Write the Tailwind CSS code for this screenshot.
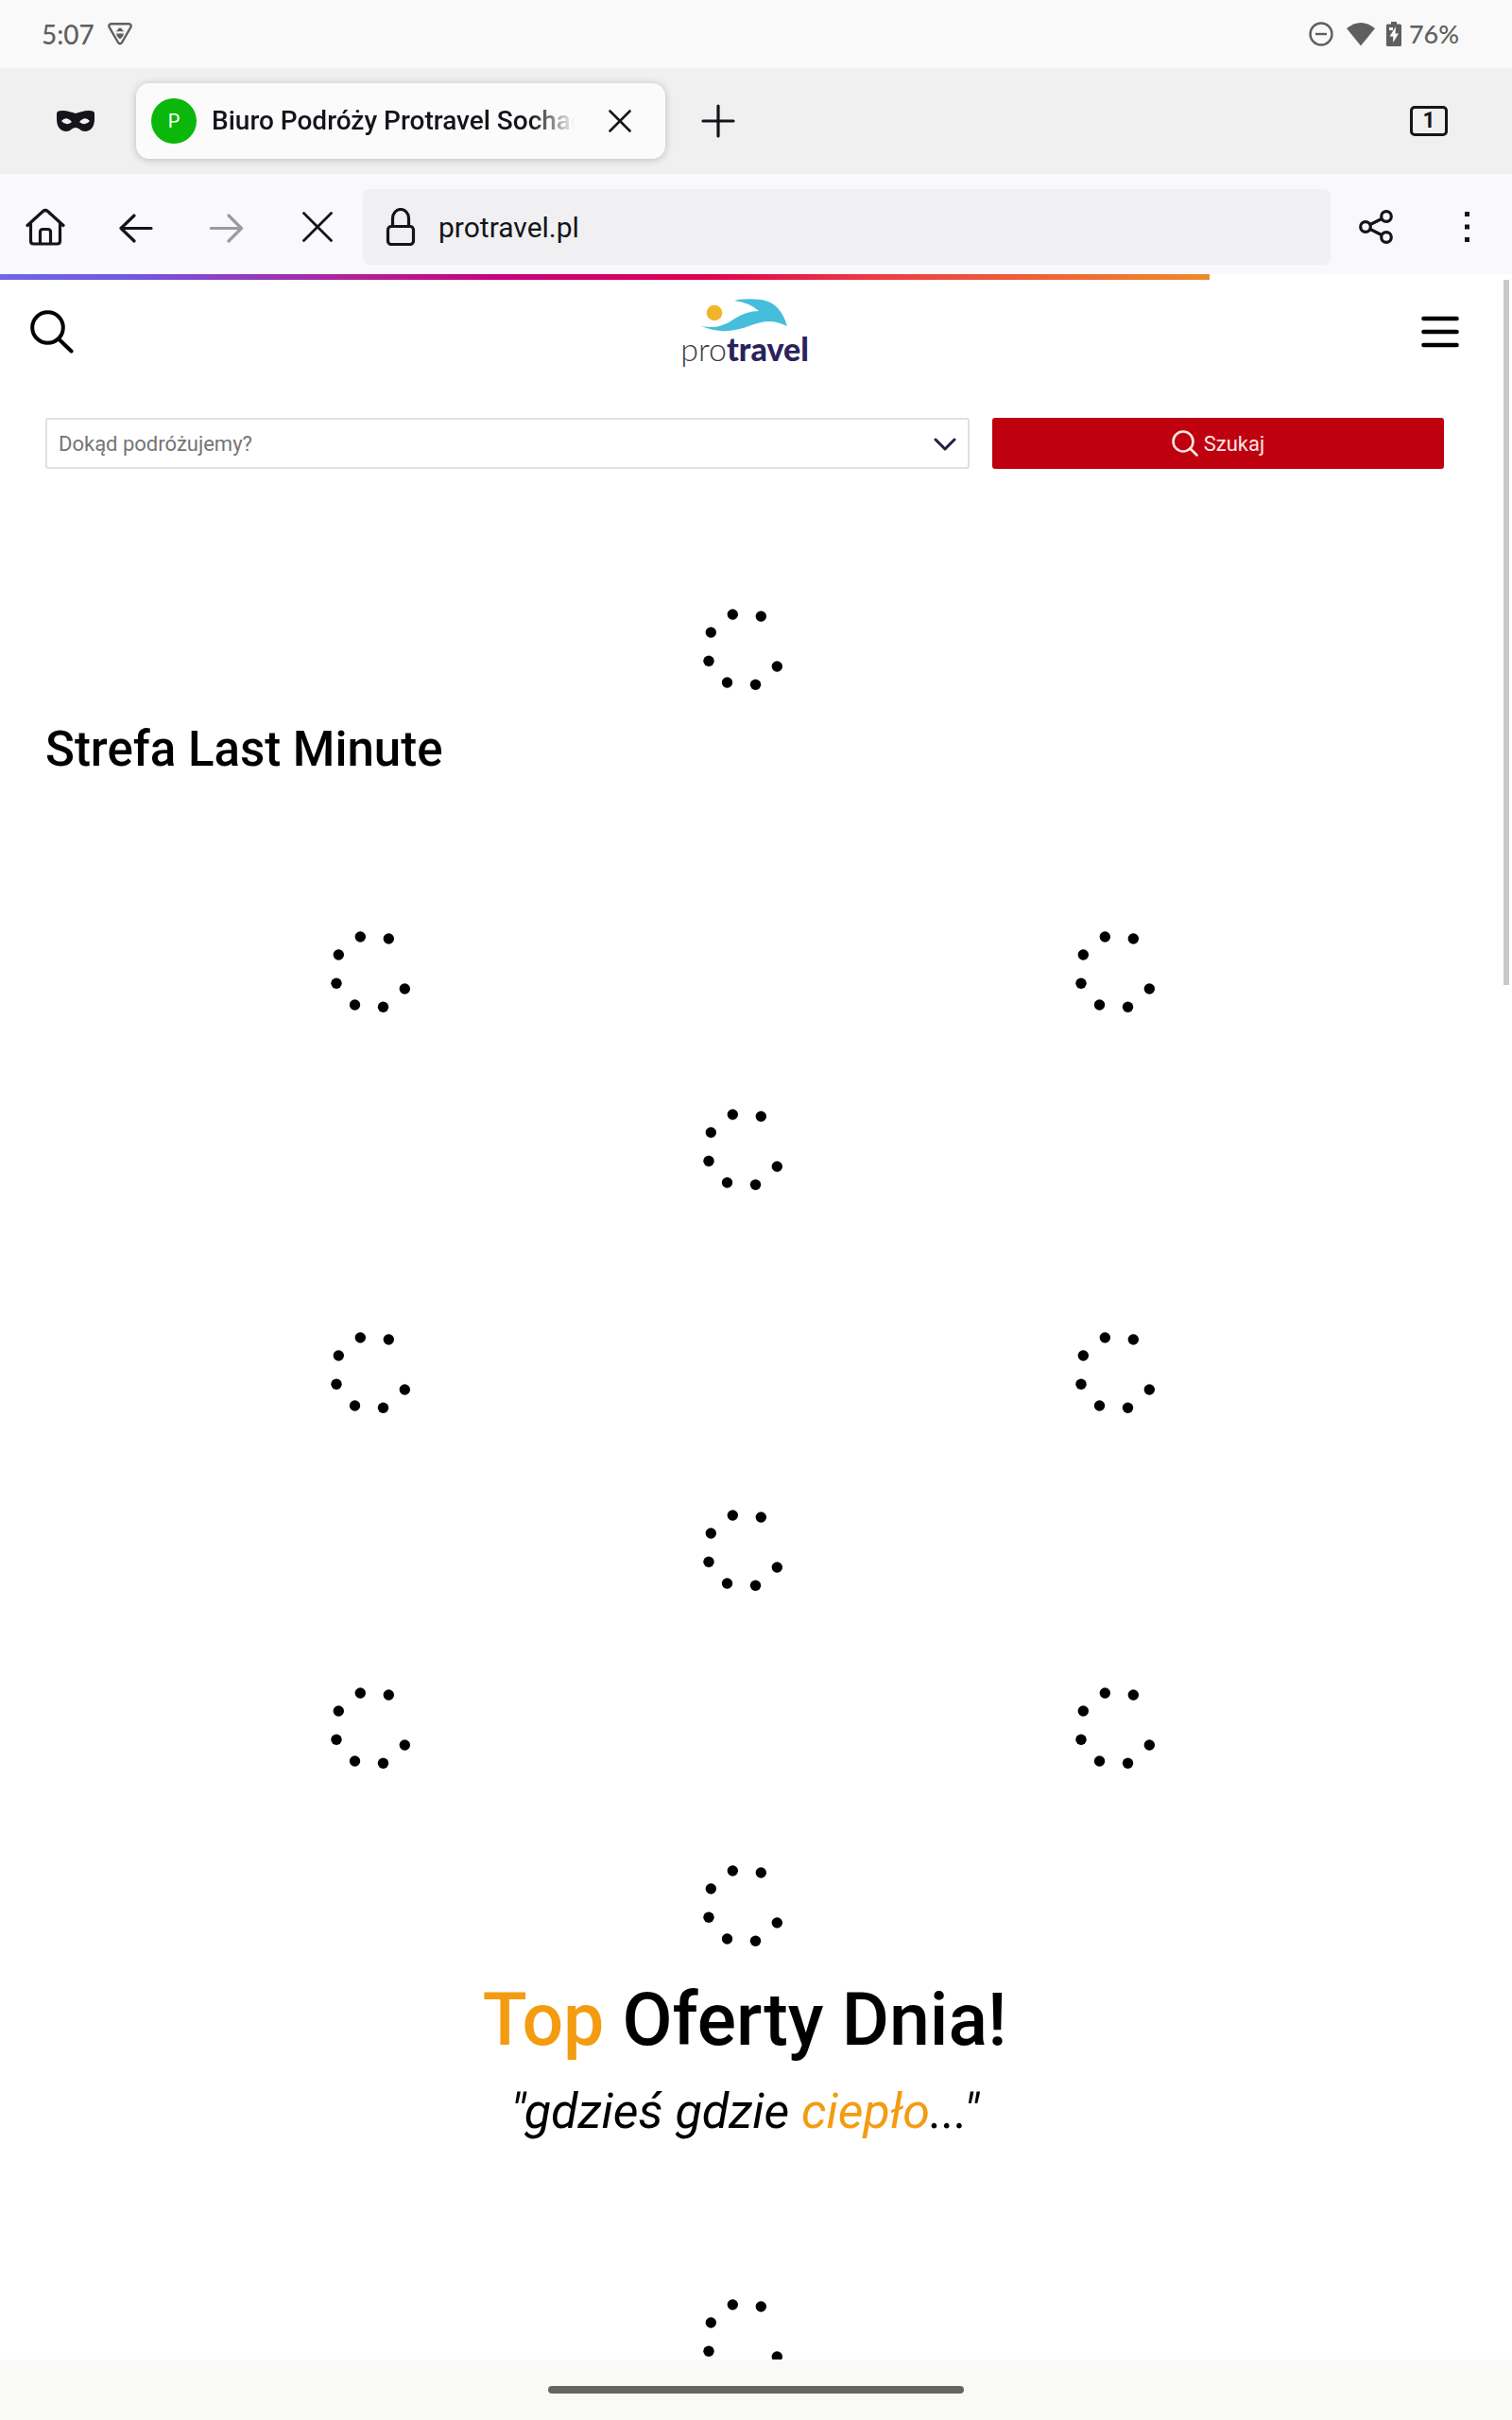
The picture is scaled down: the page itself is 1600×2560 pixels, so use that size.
<!DOCTYPE html>
<html lang="pl">
<head>
<meta charset="utf-8">
<meta name="viewport" content="width=device-width, initial-scale=1">
<title>Biuro Podróży Protravel Sochaczew</title>
<script src="https://cdn.jsdelivr.net/npm/@tailwindcss/browser@4"></script>
</head>
<body class="flex h-screen flex-col overflow-hidden bg-white font-['Roboto',sans-serif] text-black">
<svg class="hidden" aria-hidden="true">
  <symbol id="spinner" viewBox="-48 -48 96 96">
    <circle cx="-12.700" cy="-37" r="5.700"/><circle cx="17.300" cy="-35" r="5.700"/><circle cx="-35.700" cy="-18" r="5.700"/><circle cx="-38" cy="12.200" r="5.700"/><circle cx="-18.500" cy="35" r="5.700"/><circle cx="11.500" cy="37.200" r="5.700"/><circle cx="34.300" cy="18" r="5.700"/>
  </symbol>
</svg>

<!-- System status bar -->
<div class="flex h-[72px] shrink-0 items-center justify-between bg-[#f9f9f9] pr-14 pl-11 font-['Lato',sans-serif] text-[28px] text-[#5f5f5f]">
  <div class="flex items-center gap-[14px]">
    <span class="font-medium">5:07</span>
    <svg class="h-6 w-[26px]" viewBox="0 0 26 24" fill="none" stroke="currentColor" stroke-width="2.400" stroke-linejoin="round"><path d="M3 1.300h20q2.500 1 1.300 3.500L15 21q-2 2.400-4 0L1.700 4.800Q.5 2.300 3 1.300z"/><path d="M8.500 9.200h9l-2-1.500-.8-2h-3.400l-.8 2zM9 11.500h8l-1 3-3 3-3-3z" fill="currentColor" stroke="none"/></svg>
  </div>
  <div class="flex items-center">
    <svg class="mr-[14px] size-[26px]" viewBox="0 0 26 26" fill="none" stroke="currentColor" stroke-width="2.400"><circle cx="13" cy="13" r="11.500"/><path d="M7 13h12"/></svg>
    <svg class="mr-3 h-[26px] w-[30px]" viewBox="0 0 30 26" fill="currentColor"><path d="M0 7Q15-5 30 7L15 25.500z"/></svg>
    <svg class="mr-2 h-[26px] w-4" viewBox="0 0 16 26"><path fill="currentColor" d="M5 0h6v2.500h3.500Q16 2.500 16 4v20.500q0 1.500-1.500 1.500h-13Q0 26 0 24.500V4q0-1.500 1.500-1.500H5z"/><path fill="#f9f9f9" d="M3 6h4v3H3zM10 5L3.500 15.500h3.700V22L13 12.500H9.500z"/></svg>
    <span class="text-[27px] font-medium">76%</span>
  </div>
</div>

<!-- Tab strip -->
<div class="flex h-28 shrink-0 items-center bg-[#f0f0f0] pr-[68px] pl-[60px] text-[#15141a]">
  <svg class="mr-11 h-6 w-10 shrink-0" viewBox="0 0 40 24"><path fill="currentColor" fill-rule="evenodd" d="M6 1c6 0 10 2 14 3 4-1 8-3 14-3 4 0 6 1 6 3v6c0 8-4 13-10 13-5 0-6-4-10-4s-5 4-10 4C4 23 0 18 0 10V4c0-2 2-3 6-3zM5 12q5-6 11 1-6 5-11-1zm30 0q-5-6-11 1 6 5 11-1z"/></svg>
  <div class="flex h-20 w-[560px] items-center rounded-[14px] bg-[#fbfbfb] pl-4 shadow-[0_1px_8px_rgba(0,0,0,0.22)]">
    <span class="flex size-12 shrink-0 items-center justify-center rounded-full bg-[#0ab70a] text-xl text-white">P</span>
    <span class="ml-4 w-[384px] overflow-hidden mask-r-from-88% text-[28px] leading-10 font-medium whitespace-nowrap">Biuro Podróży Protravel Sochaczew</span>
    <button class="ml-9 size-6" aria-label="Zamknij kartę"><svg class="size-6" viewBox="0 0 24 24" stroke="currentColor" stroke-width="2.600" stroke-linecap="round"><path d="M1.500 1.500l21 21M22.500 1.500l-21 21"/></svg></button>
  </div>
  <button class="ml-[38px] size-9" aria-label="Nowa karta"><svg class="size-9" viewBox="0 0 36 36" stroke="currentColor" stroke-width="3.200" stroke-linecap="round"><path d="M18 2v32M2 18h32"/></svg></button>
  <button class="ml-auto h-8 w-10 rounded-[5px] border-3 border-current text-[23px] leading-[26px] font-bold" aria-label="Karty: 1">1</button>
</div>

<!-- Address bar -->
<div class="flex h-[106px] shrink-0 items-center bg-[#f9f9fb] pt-[6px] text-[#15141a]">
  <button class="flex w-24 justify-center" aria-label="Strona główna"><svg class="h-10 w-[42px]" viewBox="0 0 42 40" fill="none" stroke="currentColor" stroke-width="3.200" stroke-linecap="round" stroke-linejoin="round"><path d="M2 18.500L18.500 3.500q2.500-2 5 0L40 18.500M5.500 16v19q0 3 3 3h25q3 0 3-3V16M15.500 37V25.500q0-3 3-3h5q3 0 3 3V37"/></svg></button>
  <button class="flex w-24 justify-center" aria-label="Wstecz"><svg class="size-9" viewBox="0 0 36 36" fill="none" stroke="currentColor" stroke-width="3.200" stroke-linecap="round" stroke-linejoin="round"><path d="M34 19.500H2M16 6L2 19.500 16 33"/></svg></button>
  <button class="flex w-24 justify-center text-[#9b9b9e]" aria-label="Dalej" disabled><svg class="size-9" viewBox="0 0 36 36" fill="none" stroke="currentColor" stroke-width="3.200" stroke-linecap="round" stroke-linejoin="round"><path d="M1.500 19.500h32M20 6l13.500 13.500L20 33"/></svg></button>
  <button class="flex w-24 justify-center" aria-label="Zatrzymaj"><svg class="size-8" viewBox="0 0 32 32" stroke="currentColor" stroke-width="2.800" stroke-linecap="round"><path d="M1.500 1.500l29 29M30.500 1.500l-29 29"/></svg></button>
  <label class="flex h-20 flex-1 items-center gap-6 rounded-lg bg-[#f0f0f3] pl-6">
    <svg class="h-10 w-8" viewBox="0 0 32 40" fill="none" stroke="currentColor" stroke-width="3.200"><rect x="2.500" y="19.500" width="27" height="19" rx="3.500"/><path d="M7.500 19V11a8.500 9.500 0 0 1 17 0v8"/></svg>
    <input class="min-w-0 flex-1 text-[30px] outline-none" type="text" value="protravel.pl" aria-label="Adres">
  </label>
  <button class="flex w-24 justify-center" aria-label="Udostępnij"><svg class="size-9" viewBox="0 0 36 36" fill="none" stroke="currentColor" stroke-width="3.200"><circle cx="7" cy="18" r="5.300"/><circle cx="29" cy="7" r="5.300"/><circle cx="29" cy="29" r="5.300"/><path d="M12 15.500l12-6M12 20.500l12 6"/></svg></button>
  <button class="flex w-24 justify-center" aria-label="Menu przeglądarki"><svg class="h-8 w-[5px]" viewBox="0 0 5 32" fill="currentColor"><path d="M0 0h5v5H0zM0 13.500h5v5H0zM0 27h5v5H0z"/></svg></button>
</div>

<div class="relative flex-1 overflow-hidden">
  <div class="h-[6px] w-4/5 bg-[linear-gradient(90deg,#6f66ea_0%,#7257e0_11%,#b0219c_29%,#c8007f_42%,#e0004f_58%,#ec3a45_72%,#ef8a2c_100%)]" role="progressbar" aria-label="Wczytywanie" aria-valuenow="80"></div>
  <div class="absolute top-[6px] right-[3px] h-[746px] w-[6px] bg-[#c9c9c9]"></div>

  <div class="pr-6">
    <header class="flex h-[110px] items-center justify-between px-8">
      <button class="size-[46px]" aria-label="Szukaj"><svg class="size-[46px]" viewBox="0 0 46 46" fill="none" stroke="currentColor" stroke-width="4" stroke-linecap="round"><circle cx="18.500" cy="18.500" r="16.300"/><path d="M30.500 31l13 12.500"/></svg></button>
      <a href="#" class="flex flex-col items-center" aria-label="protravel">
        <svg class="h-9 w-[92px]" viewBox="0 0 92 36"><circle cx="14" cy="16" r="8.300" fill="#f1b52b"/><path fill="#45bedb" d="M0 30q19 4 34-7 13-9 27-9-10-9-26-11 10-3 28-1c16 2 24 14 28 28-16-8-26-5-38-1-20 8-36 8-53 1z"/></svg>
        <span class="font-['Lato',sans-serif] text-[34px] leading-9 text-[#29235c]"><span class="font-light text-[#3c3c46]">pro</span><span class="font-black">travel</span></span>
      </a>
      <button class="flex w-[46px] justify-end" aria-label="Menu"><svg class="size-10" viewBox="0 0 40 40" stroke="currentColor" stroke-width="4.600" stroke-linecap="round"><path d="M2.500 6h35M2.500 20h35M2.500 34h35"/></svg></button>
    </header>

    <main>
      <form class="flex gap-6 px-12 pt-9">
        <div class="relative flex-[978]">
          <select class="h-[54px] w-full appearance-none rounded-[3px] border-2 border-[#e0e0e0] bg-white px-3 text-[22px] text-[#757575]" aria-label="Dokąd podróżujemy?"><option>Dokąd podróżujemy?</option></select>
          <svg class="pointer-events-none absolute top-[21px] right-[14px] h-[14px] w-6" viewBox="0 0 24 14" fill="none" stroke="#1f1f45" stroke-width="3" stroke-linecap="round" stroke-linejoin="round"><path d="M2 2l10 10L22 2"/></svg>
        </div>
        <button class="flex h-[54px] flex-[478] items-center justify-center gap-[6px] rounded-[3px] bg-[#be000f] text-[22px] text-[#ffe6e3]" type="button">
          <svg class="size-7" viewBox="0 0 28 28" fill="none" stroke="currentColor" stroke-width="2.600" stroke-linecap="round"><circle cx="12" cy="12" r="10.500"/><path d="M19.500 19.500l7 7"/></svg>
          Szukaj
        </button>
      </form>

      <svg class="mx-auto mt-[143px] size-24"><use href="#spinner"/></svg>

      <h2 class="mt-5 px-12 text-[51px] leading-[76px] font-medium">Strefa Last Minute</h2>

      <section class="mt-[149px] flex flex-col gap-[92px]">
        <div class="grid grid-cols-2 justify-items-center"><svg class="size-24"><use href="#spinner"/></svg><svg class="size-24"><use href="#spinner"/></svg></div>
        <svg class="mx-auto size-24"><use href="#spinner"/></svg>
      </section>
      <section class="mt-[140px] flex flex-col gap-[92px]">
        <div class="grid grid-cols-2 justify-items-center"><svg class="size-24"><use href="#spinner"/></svg><svg class="size-24"><use href="#spinner"/></svg></div>
        <svg class="mx-auto size-24"><use href="#spinner"/></svg>
        <div class="grid grid-cols-2 justify-items-center"><svg class="size-24"><use href="#spinner"/></svg><svg class="size-24"><use href="#spinner"/></svg></div>
        <svg class="mx-auto size-24"><use href="#spinner"/></svg>
      </section>

      <h1 class="mt-[22px] text-center text-[77px] leading-[102px] font-medium"><span class="text-[#f39c12]">Top</span> Oferty Dnia!</h1>
      <p class="mt-2 text-center text-[52px] leading-[76px] italic">"gdzieś gdzie <span class="text-[#f39c12]">ciepło</span>..."</p>
      <svg class="mx-auto mt-[155px] size-24"><use href="#spinner"/></svg>
    </main>
  </div>
</div>

<!-- System gesture bar -->
<div class="flex h-16 shrink-0 items-center justify-center bg-[#f9f9f8]"><div class="h-2 w-[440px] rounded-full bg-[#646561]"></div></div>
</body>
</html>
